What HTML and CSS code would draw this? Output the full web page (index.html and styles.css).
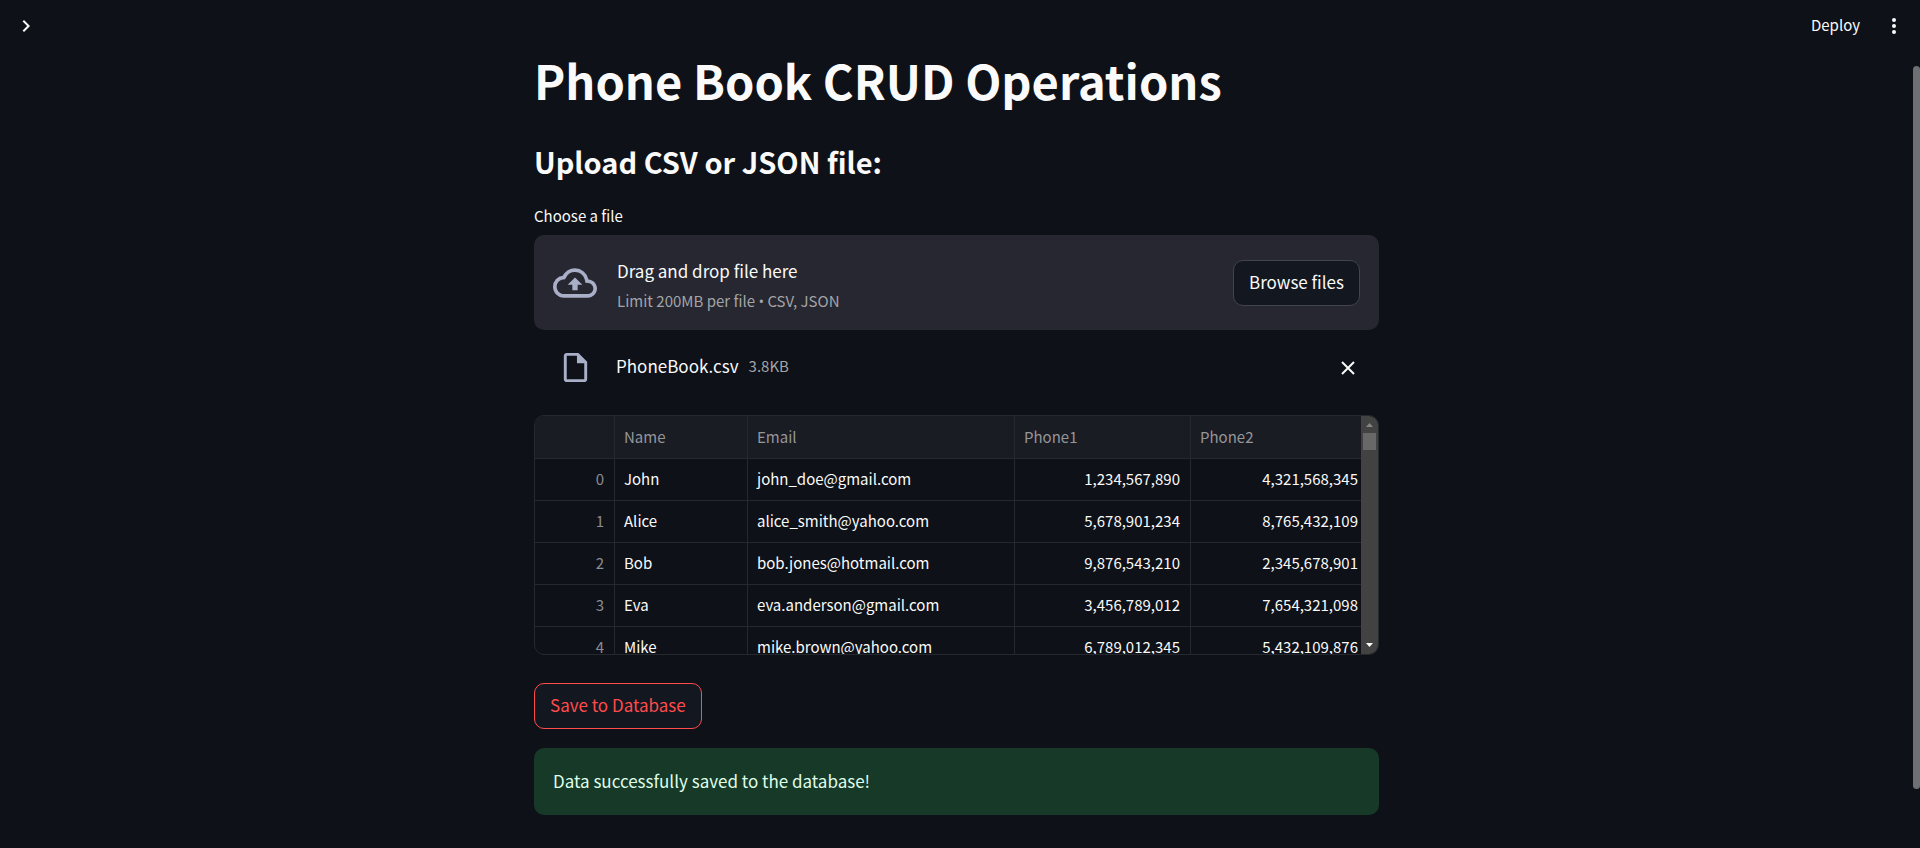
FILE: index.html
```html
<!DOCTYPE html>
<html lang="en">
<head>
<meta charset="utf-8">
<meta name="viewport" content="width=device-width, initial-scale=1">
<title>Phone Book CRUD Operations</title>
<link rel="stylesheet" href="styles.css">
</head>
<body>
<div class="app">
  <div class="page">
    <header class="toolbar">
      <button class="icon-button" type="button" aria-label="Open sidebar">
        <svg class="icon-chevron" viewBox="0 0 24 24" aria-hidden="true"><path d="M10 6 8.590 7.410 13.170 12l-4.580 4.590L10 18l6-6z"/></svg>
      </button>
      <div class="toolbar-actions">
        <button class="deploy" type="button">Deploy</button>
        <button class="icon-button" type="button" aria-label="Main menu">
          <svg class="icon-menu" viewBox="0 0 16 20" aria-hidden="true"><circle cx="8" cy="4" r="2"/><circle cx="8" cy="10" r="2"/><circle cx="8" cy="16" r="2"/></svg>
        </button>
      </div>
    </header>
    <main class="content">
      <h1>Phone Book CRUD Operations</h1>
      <h2>Upload CSV or JSON file:</h2>
      <label class="field-label" for="browse">Choose a file</label>
      <section class="dropzone">
        <svg class="icon-cloud" viewBox="0 0 24 24" aria-hidden="true"><path d="M19.350 10.040A7.490 7.490 0 0 0 12 4C9.110 4 6.600 5.640 5.350 8.040A5.994 5.994 0 0 0 0 14c0 3.310 2.690 6 6 6h13c2.760 0 5-2.240 5-5 0-2.640-2.050-4.780-4.650-4.960zM19 18H6c-2.210 0-4-1.790-4-4 0-2.050 1.530-3.760 3.560-3.970l1.070-.11.5-.95A5.469 5.469 0 0 1 12 6c2.620 0 4.880 1.860 5.390 4.430l.3 1.500 1.530.11A2.980 2.980 0 0 1 22 15c0 1.650-1.350 3-3 3zM8 13h2.550v3h2.900v-3H16l-4-4z"/></svg>
        <div class="drop-text">
          <span>Drag and drop file here</span>
          <small>Limit 200MB per file <span class="bullet">•</span> CSV, JSON</small>
        </div>
        <button class="button" id="browse" type="button">Browse files</button>
      </section>
      <div class="file-row">
        <svg class="icon-file" viewBox="0 0 24 24" aria-hidden="true"><path fill-rule="evenodd" d="M14 2H6c-1.100 0-2 .9-2 2v16c0 1.100.9 2 2 2h12c1.100 0 2-.9 2-2V8zM6 20V4h7v5h5v11z"/></svg>
        <div class="file-info">
          <span>PhoneBook.csv</span>
          <small>3.8KB</small>
        </div>
        <button class="icon-button" type="button" aria-label="Remove file">
          <svg class="icon-close" viewBox="0 0 14 14" aria-hidden="true"><path d="M1 1l12 12M13 1 1 13"/></svg>
        </button>
      </div>
      <div class="grid">
        <div class="grid-view">
          <table>
            <colgroup><col class="col-index"><col class="col-name"><col class="col-email"><col class="col-phone"><col></colgroup>
            <thead>
              <tr><th></th><th>Name</th><th>Email</th><th>Phone1</th><th>Phone2</th></tr>
            </thead>
            <tbody>
              <tr><td class="index">0</td><td>John</td><td>john_doe@gmail.com</td><td class="number">1,234,567,890</td><td class="number">4,321,568,345</td></tr>
              <tr><td class="index">1</td><td>Alice</td><td>alice_smith@yahoo.com</td><td class="number">5,678,901,234</td><td class="number">8,765,432,109</td></tr>
              <tr><td class="index">2</td><td>Bob</td><td>bob.jones@hotmail.com</td><td class="number">9,876,543,210</td><td class="number">2,345,678,901</td></tr>
              <tr><td class="index">3</td><td>Eva</td><td>eva.anderson@gmail.com</td><td class="number">3,456,789,012</td><td class="number">7,654,321,098</td></tr>
              <tr><td class="index">4</td><td>Mike</td><td>mike.brown@yahoo.com</td><td class="number">6,789,012,345</td><td class="number">5,432,109,876</td></tr>
            </tbody>
          </table>
        </div>
        <div class="grid-scrollbar" aria-hidden="true">
          <svg class="arrow arrow-up" viewBox="0 0 17 17"><path d="M5 11h7L8.500 7z"/></svg>
          <div class="grid-thumb"></div>
          <svg class="arrow arrow-down" viewBox="0 0 17 17"><path d="M5 6h7l-3.500 4z"/></svg>
        </div>
      </div>
      <button class="button save" type="button">Save to Database</button>
      <div class="alert" role="alert">Data successfully saved to the database!</div>
    </main>
  </div>
  <div class="page-scrollbar" aria-hidden="true"><div class="page-thumb"></div></div>
</div>
</body>
</html>
```
FILE: styles.css
```css
* {
  box-sizing: border-box;
}

body {
  margin: 0;
  background: #0e1117;
  color: #fafafa;
  font-family: "Noto Sans CJK SC", "Open Sans", sans-serif;
  font-size: 17px;
  line-height: 28px;
}

button {
  font: inherit;
  color: inherit;
  cursor: pointer;
}

small {
  font-size: 15px;
  line-height: 24px;
  color: #a3a4a8;
}

svg {
  display: block;
  flex: none;
  fill: currentColor;
}

.app {
  display: grid;
  grid-template-columns: minmax(0, 1fr) 7px;
  min-height: 100vh;
}

.toolbar {
  display: flex;
  align-items: center;
  justify-content: space-between;
  height: 52px;
  padding: 0 5px 0 12px;
}

.toolbar-actions {
  display: flex;
  align-items: center;
  gap: 20px;
}

.icon-button {
  display: grid;
  place-items: center;
  width: 28px;
  height: 28px;
  padding: 0;
  border: 0;
  background: none;
}

.deploy {
  padding: 0 0 2px;
  border: 0;
  background: none;
  font-size: 15px;
  line-height: 24px;
}

.icon-chevron {
  width: 24px;
  height: 24px;
}

.icon-menu {
  width: 16px;
  height: 20px;
}

.content {
  display: flex;
  flex-direction: column;
  align-items: stretch;
  width: 100%;
  max-width: 845px;
  margin: 0 auto;
  padding-bottom: 32px;
}

h1,
h2 {
  margin: 0;
}

h1 {
  font-size: 47px;
  line-height: 56px;
  font-weight: 700;
}

h2 {
  margin-top: 33px;
  font-size: 29px;
  line-height: 40px;
  font-weight: 700;
}

.field-label {
  margin: 23px 0 7px;
  font-size: 15px;
  line-height: 24px;
}

.dropzone {
  display: flex;
  align-items: center;
  padding: 18px 19px 17px;
  border-radius: 10px;
  background: #262730;
}

.icon-cloud {
  width: 44px;
  height: 44px;
  margin-right: 20px;
  color: #a9afc7;
}

.drop-text {
  display: flex;
  flex: 1;
  flex-direction: column;
  gap: 4px;
  padding-top: 4px;
}

.bullet {
  font-family: "Open Sans", sans-serif;
}

.button {
  padding: 7px 15px 9px;
  border: 1px solid #41444c;
  border-radius: 10px;
  background: #131720;
}

.file-row {
  display: flex;
  align-items: center;
  gap: 23px;
  padding: 20px 17px 30px 24px;
}

.icon-file {
  width: 35px;
  height: 35px;
  color: #a9afc7;
}

.file-info {
  display: flex;
  flex: 1;
  align-items: center;
  gap: 10px;
  padding-bottom: 4px;
}

.icon-close {
  width: 14px;
  height: 14px;
  fill: none;
  stroke: currentColor;
  stroke-width: 2;
}

.grid {
  display: flex;
  height: 240px;
  border: 1px solid #25282d;
  border-radius: 10px;
  overflow: hidden;
}

.grid-view {
  flex: 1;
  min-width: 0;
  overflow: hidden;
}

table {
  width: 834px;
  table-layout: fixed;
  border-collapse: separate;
  border-spacing: 0;
  font-size: 15px;
  line-height: 24px;
}

.col-index {
  width: 80px;
}

.col-name {
  width: 133px;
}

.col-email {
  width: 267px;
}

.col-phone {
  width: 176px;
}

th,
td {
  height: 42px;
  padding: 0 10px 2px 9px;
  border-right: 1px solid #25282d;
  border-bottom: 1px solid #25282d;
  font-weight: 400;
  text-align: left;
}

th {
  height: 43px;
  padding-bottom: 0;
  background: #1a1c24;
  color: #95969a;
}

.index {
  color: #8b8d92;
  text-align: right;
}

.number {
  text-align: right;
}

.grid-scrollbar {
  display: flex;
  flex-direction: column;
  align-items: center;
  width: 17px;
  background: #424242;
}

.grid-thumb {
  width: 13px;
  height: 17px;
  background: #686868;
}

.arrow {
  width: 17px;
  height: 17px;
}

.arrow-up {
  color: #868686;
}

.arrow-down {
  margin-top: auto;
  color: #ffffff;
}

.save {
  align-self: flex-start;
  margin: 28px 0 19px;
  border-color: #ff4b4b;
  color: #ff4b4b;
}

.alert {
  padding: 19px 19px 20px;
  border-radius: 10px;
  background: #173928;
  color: #dffde9;
}

.page-scrollbar {
  display: flex;
  padding: 66px 0 59px;
}

.page-thumb {
  flex: 1;
  border-radius: 4px;
  background: #6f7074;
}
```
